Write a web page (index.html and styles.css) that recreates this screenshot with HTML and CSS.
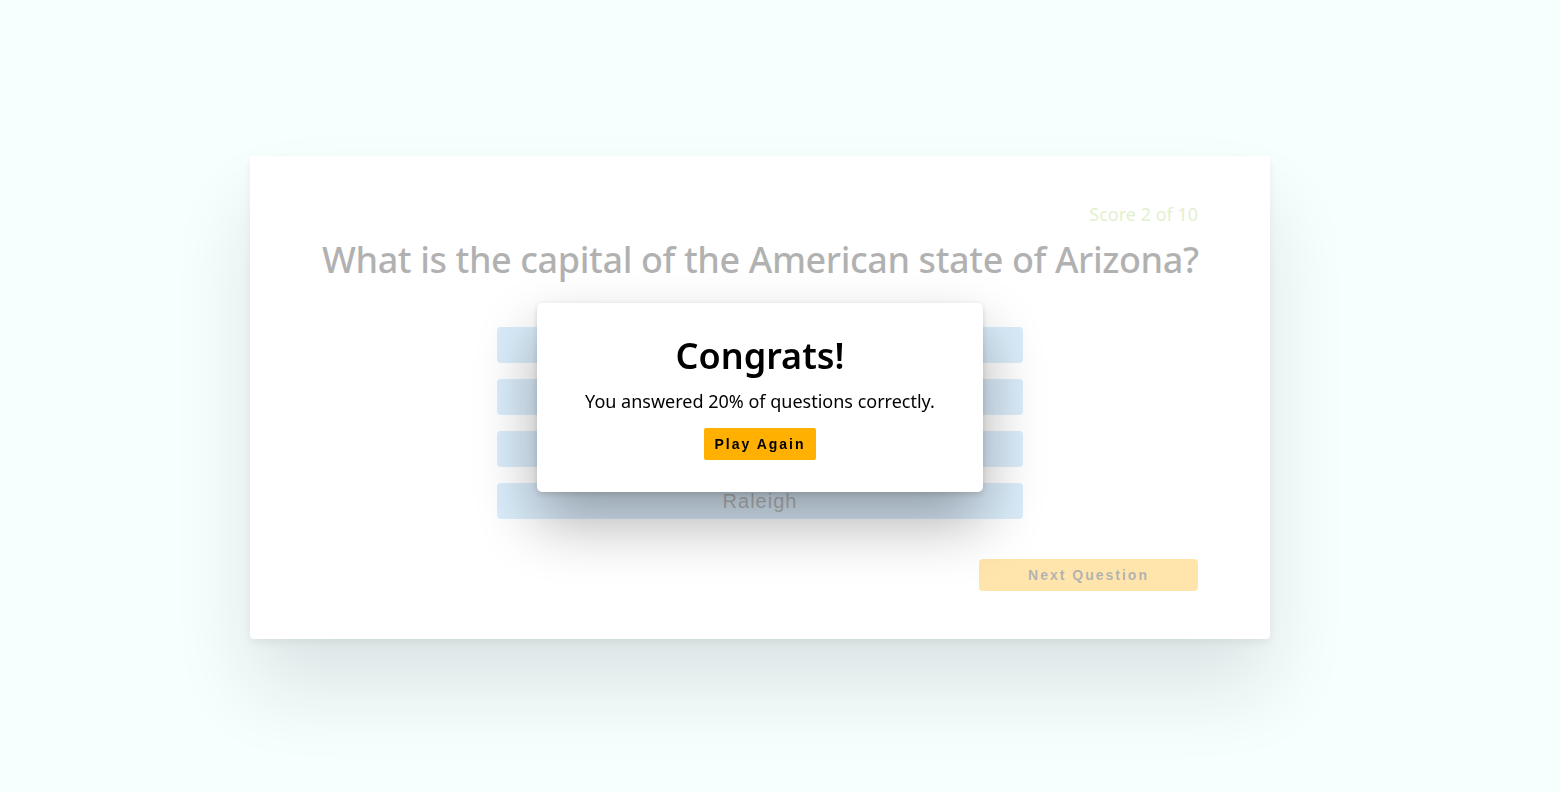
FILE: index.html
```html
<!DOCTYPE html>
<html lang="en">
<head>
<meta charset="utf-8">
<title>Quiz</title>
<link rel="stylesheet" href="styles.css">
</head>
<body>
<main class="page">
  <section class="card">
    <div class="quiz faded">
      <p class="score">Score 2 of 10</p>
      <h1 class="question">What is the capital of the American state of Arizona?</h1>
      <div class="answers">
        <button class="answer">Phoenix</button>
        <button class="answer">Tucson</button>
        <button class="answer">Mesa</button>
        <button class="answer">Raleigh</button>
      </div>
      <div class="actions">
        <button class="next">Next Question</button>
      </div>
    </div>
  </section>
  <div class="modal">
    <h2 class="modal-title">Congrats!</h2>
    <p class="modal-text">You answered 20% of questions correctly.</p>
    <button class="play">Play Again</button>
  </div>
</main>
</body>
</html>
```

FILE: styles.css
```css
* { box-sizing: border-box; }
html, body { margin: 0; height: 100%; }
body {
  background: #f7fffe;
  font-family: "Noto Sans", "Open Sans", sans-serif;
  overflow: hidden;
}
.page {
  width: 1520px;
  height: 792px;
  display: flex;
  align-items: center;
  justify-content: center;
}
.card {
  width: 1020px;
  height: 483px;
  margin-top: 3px;
  background: #fff;
  border-radius: 4px;
  box-shadow: 0 50px 80px rgba(10, 20, 25, 0.11), 0 4px 10px rgba(0, 0, 0, 0.06);
  padding: 46px 72px 48px;
}
.quiz { display: flex; flex-direction: column; }
.faded { opacity: 0.32; }
.score {
  margin: 0;
  text-align: right;
  font-size: 18px;
  line-height: 24px;
  color: #a6d06a;
}
.question {
  margin: 10px 0 0;
  text-align: right;
  white-space: nowrap;
  font-size: 36px;
  font-weight: 500;
  line-height: 48px;
  color: #111;
  letter-spacing: -0.4px;
}
.answers {
  margin-top: 43px;
  align-self: center;
  width: 526px;
  display: flex;
  flex-direction: column;
  gap: 16px;
}
.answer {
  height: 36px;
  border: 0;
  border-radius: 4px;
  background: #8ec6f0;
  font-family: "Liberation Sans", Arial, sans-serif;
  font-size: 20px;
  letter-spacing: 1px;
  color: #222;
  padding: 0;
}
.actions {
  margin-top: 40px;
  display: flex;
  justify-content: flex-end;
}
.next {
  width: 219px;
  height: 32px;
  border: 0;
  border-radius: 4px;
  background: #ffb000;
  font-family: "Liberation Sans", Arial, sans-serif;
  font-weight: 700;
  font-size: 14px;
  letter-spacing: 2px;
  color: #111;
}
.modal {
  position: fixed;
  left: 537px;
  top: 303px;
  width: 446px;
  height: 189px;
  background: #fff;
  border-radius: 5px;
  box-shadow: 0 30px 60px rgba(0, 0, 0, 0.32), 0 2px 6px rgba(0, 0, 0, 0.15);
  display: flex;
  flex-direction: column;
  align-items: center;
  padding-top: 30px;
}
.modal-title {
  margin: 0;
  font-size: 36px;
  font-weight: 600;
  line-height: 46px;
  color: #000;
}
.modal-text {
  margin: 10px 0 0;
  font-size: 18px;
  line-height: 24px;
  color: #000;
}
.play {
  margin-top: 15px;
  width: 112px;
  height: 32px;
  border: 0;
  border-radius: 2px;
  background: #ffb000;
  font-family: "Liberation Sans", Arial, sans-serif;
  font-weight: 700;
  font-size: 14px;
  letter-spacing: 2px;
  color: #000;
  padding: 0;
}
```
